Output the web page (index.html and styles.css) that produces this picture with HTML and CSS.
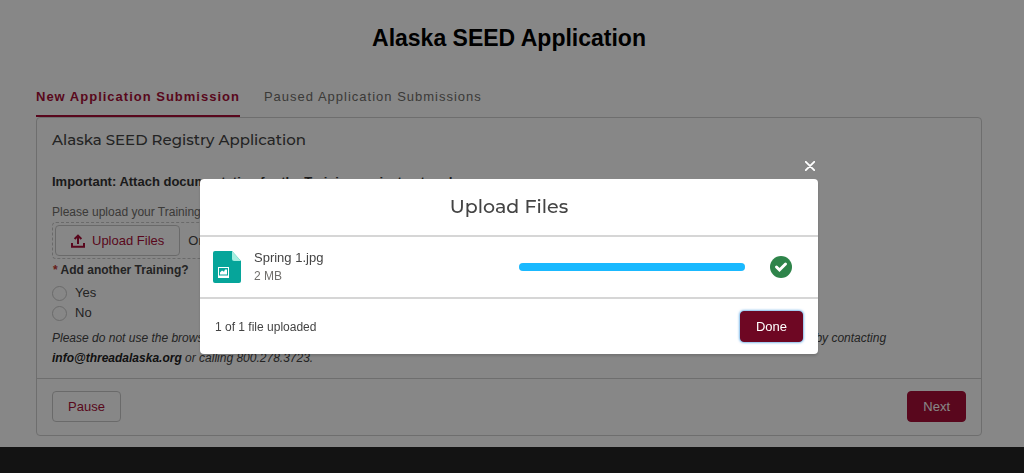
FILE: index.html
```
<!DOCTYPE html>
<html lang="en">
<head>
<meta charset="UTF-8" />
<meta name="viewport" content="width=device-width, initial-scale=1" />
<title>Alaska SEED Application</title>
<link rel="stylesheet" href="styles.css">
</head>
<body>
<main>
    <h1>Alaska SEED Application</h1>
    <nav class="tabs">
        <a class="tab active" href="#new">New Application Submission</a>
        <a class="tab" href="#paused">Paused Application Submissions</a>
    </nav>
    <form class="card" id="new">
        <div class="card-body">
            <h2>Alaska SEED Registry Application</h2>
            <p class="important">Important: Attach documentation for the Training project entered.</p>
            <label class="upload-label" for="uploadBtn">Please upload your Training certificate</label>
            <div class="dropzone">
                <button type="button" class="btn upload-btn" id="uploadBtn">
                    <svg width="14" height="14" viewBox="0 0 14 14" fill="none" stroke="currentColor" stroke-width="2">
                        <path d="M1 9v3.800h12V9M7 10V2M3.600 5L7 1.600l3.400 3.400" />
                    </svg>
                    Upload Files
                </button>
                <span>Or drop files</span>
            </div>
            <fieldset>
                <legend><span class="required">*</span> Add another Training?</legend>
                <label class="radio"><input type="radio" name="another" value="yes" /> Yes</label>
                <label class="radio"><input type="radio" name="another" value="no" /> No</label>
            </fieldset>
            <p class="note">Please do not use the browser's back button while completing the application. If you need some help, get support from your thread registry staff by contacting <strong>info@threadalaska.org</strong> or calling 800.278.3723.</p>
        </div>
        <div class="card-footer">
            <button type="button" class="btn">Pause</button>
            <button type="submit" class="btn btn-brand">Next</button>
        </div>
    </form>
</main>
<footer class="site-footer"></footer>

<div class="backdrop">
    <section class="modal" role="dialog" aria-labelledby="modalTitle">
        <button type="button" class="close" aria-label="Close">
            <svg width="10" height="10" viewBox="0 0 10 10" stroke="currentColor" stroke-width="1.800" stroke-linecap="round">
                <path d="M.8.8l8.400 8.400M9.200.8L.8 9.200" />
            </svg>
        </button>
        <header class="modal-header">
            <h2 id="modalTitle">Upload Files</h2>
        </header>
        <div class="modal-body">
            <svg class="file-icon" width="28" height="32" viewBox="0 0 28 32">
                <path fill="#06a59a" d="M2 0h17l9 10v20a2 2 0 0 1-2 2H2a2 2 0 0 1-2-2V2a2 2 0 0 1 2-2z" />
                <path fill="#a5eee0" d="M19 0l9 10h-7a2 2 0 0 1-2-2z" />
                <path fill="#fff" fill-rule="evenodd" d="M5 16h11v11H5zM6 17v7.500h9V17z" />
                <path fill="#fff" d="M7 23.500v-2l2-2 2 1.200 1-2.200h2v5z" />
            </svg>
            <div class="file-info">
                <span class="file-name">Spring 1.jpg</span>
                <span class="file-size">2 MB</span>
            </div>
            <div class="progress" role="progressbar" aria-label="Spring 1.jpg" aria-valuenow="100"><div class="progress-value"></div></div>
            <svg class="check-icon" width="22" height="22" viewBox="0 0 22 22">
                <circle cx="11" cy="11" r="11" fill="#2e844a" />
                <path d="M6.500 11l3 3L15.500 8" fill="none" stroke="#fff" stroke-width="3" stroke-linecap="round" />
            </svg>
        </div>
        <footer class="modal-footer">
            <span>1 of 1 file uploaded</span>
            <button type="button" class="btn btn-done">Done</button>
        </footer>
    </section>
</div>
</body>
</html>
```
FILE: styles.css
```
* {
    box-sizing: border-box;
}
body {
    font-family: "Liberation Sans", Arial, sans-serif;
    font-size: 13px;
    line-height: 20px;
    color: #444;
    background: #fff;
    margin: 0;
    min-height: 100vh;
    display: flex;
    flex-direction: column;
}
main {
    padding: 20px 42px 11px 36px;
}
h1 {
    margin: 0 0 33px;
    color: #000;
    font-size: 23px;
    line-height: 36px;
    text-align: center;
}
h2 {
    margin: 0;
    font-family: Montserrat, Inter, sans-serif;
    font-weight: 500;
}
.tabs {
    display: flex;
    gap: 24px;
}
.tab {
    padding-bottom: 10px;
    border-bottom: 2px solid transparent;
    color: #706e6b;
    font-size: 13px;
    line-height: 16px;
    letter-spacing: 1px;
    text-decoration: none;
}
.tab.active {
    border-color: #a80f37;
    color: #a80f37;
    font-weight: bold;
}
.card {
    border: 1px solid #d0d0d0;
    border-radius: 4px;
}
.card-body {
    padding: 12px 15px 10px;
}
.card-body h2 {
    font-size: 15px;
    line-height: 20px;
}
.important {
    margin: 22px 0 10px;
    color: #333;
    font-size: 13px;
    font-weight: bold;
}
.upload-label {
    display: block;
    color: #706e6b;
    font-size: 12px;
}
.dropzone {
    display: flex;
    align-items: center;
    gap: 8px;
    width: 320px;
    padding: 2px;
    border: 1px dashed #c9c9c9;
    border-radius: 4px;
}
.btn {
    height: 31px;
    padding: 0 15px;
    border: 1px solid #c9c9c9;
    border-radius: 4px;
    background: #fff;
    color: #a80f37;
    font-family: inherit;
    font-size: 13px;
    cursor: pointer;
}
.upload-btn {
    display: flex;
    align-items: center;
    gap: 7px;
}
.btn-brand {
    border-color: #a80f37;
    background: #a80f37;
    color: #fff;
}
fieldset {
    margin: 1px 0 0;
    padding: 0;
    border: 0;
}
legend {
    padding: 0 1px;
    margin-bottom: 3px;
    font-size: 12px;
    font-weight: bold;
}
.required {
    color: #c23934;
}
.radio {
    display: flex;
    align-items: center;
    gap: 8px;
}
.radio input {
    appearance: none;
    width: 15px;
    height: 15px;
    margin: 0;
    border: 1px solid #c9c9c9;
    border-radius: 50%;
}
.note {
    margin: 5px 0 0;
    font-size: 12px;
    font-style: italic;
}
.note strong {
    color: #222;
}
.card-footer {
    display: flex;
    justify-content: space-between;
    padding: 12px 15px 13px;
    border-top: 1px solid #d0d0d0;
}
.site-footer {
    flex: 1;
    min-height: 26px;
    background: #242424;
}
.backdrop {
    position: fixed;
    inset: 0;
    display: flex;
    align-items: center;
    justify-content: center;
    padding: 60px 6px 0 0;
    background: rgba(0, 0, 0, 0.47);
}
.modal {
    position: relative;
    width: 100%;
    max-width: 618px;
    border-radius: 4px;
    background: #fff;
    box-shadow: 0 2px 3px rgba(0, 0, 0, 0.16);
}
.close {
    position: absolute;
    top: -18px;
    right: 3px;
    display: flex;
    padding: 0;
    border: 0;
    background: none;
    color: #fff;
    cursor: pointer;
}
.modal-header {
    padding: 16px;
    border-bottom: 2px solid #d6d6d6;
    text-align: center;
}
.modal-header h2 {
    font-size: 19px;
    line-height: 24px;
}
.modal-body {
    display: flex;
    align-items: center;
    padding: 11px 26px 11px 13px;
}
.file-info {
    flex: 1;
    display: flex;
    flex-direction: column;
    padding-left: 13px;
    line-height: 19px;
}
.file-size {
    color: #706e6b;
    font-size: 12px;
}
.progress {
    width: 226px;
    height: 8px;
    margin-right: 25px;
    border-radius: 4px;
    background: #e5e5e5;
}
.progress-value {
    height: 100%;
    border-radius: 4px;
    background: #1ab9ff;
}
.modal-footer {
    display: flex;
    align-items: center;
    justify-content: space-between;
    padding: 12px 15px;
    border-top: 2px solid #d6d6d6;
    font-size: 12px;
}
.btn-done {
    border-color: #6e0723;
    background: #6e0723;
    color: #fff;
    box-shadow: 0 0 3px #0176d3;
}
```
